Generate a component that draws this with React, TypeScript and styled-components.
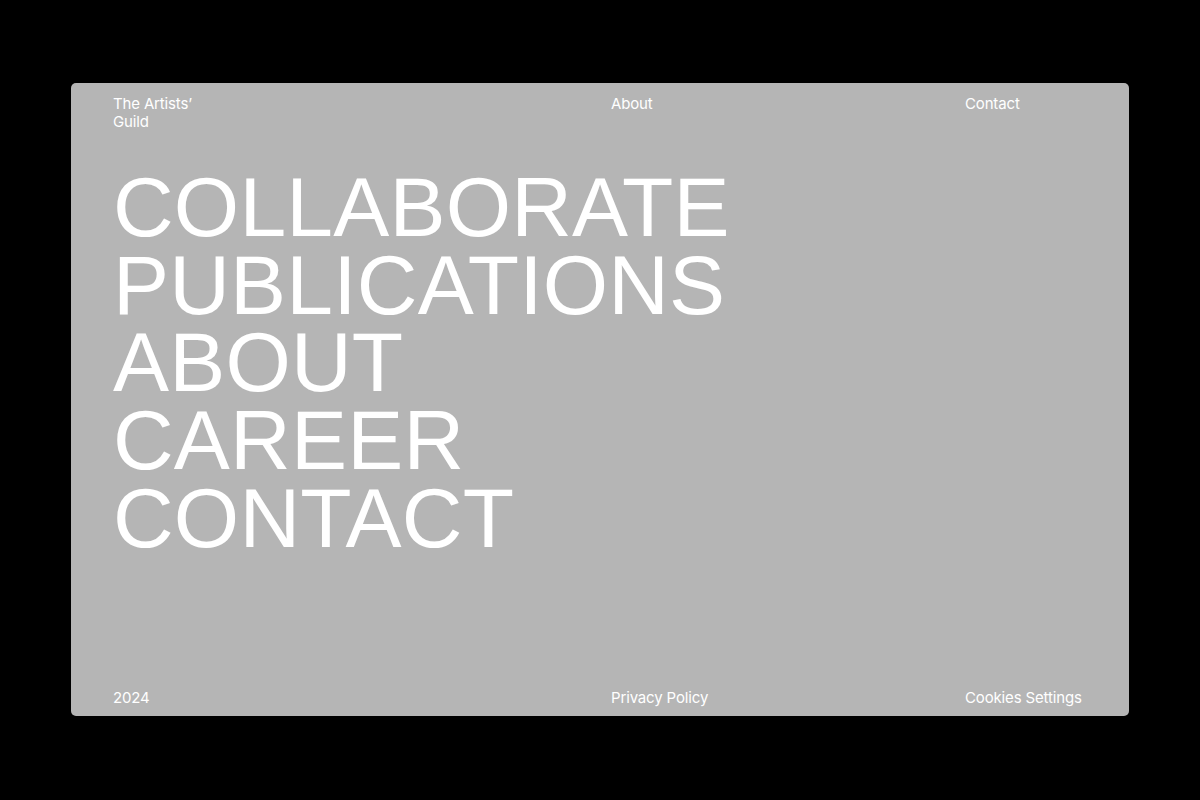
import React from "react";
import styled, { createGlobalStyle } from "styled-components";

const GlobalStyle = createGlobalStyle`
  html, body {
    margin: 0;
    padding: 0;
    background: #000;
  }
  body {
    padding: 83px 71px 84px;
    font-family: Inter, "Liberation Sans", sans-serif;
  }
`;

const Card = styled.main`
  height: 633px;
  background: #b5b5b5;
  border-radius: 5px;
  padding: 12px 42px 9px;
  box-sizing: border-box;
  display: flex;
  flex-direction: column;
  color: #fff;
`;

const Bar = styled.div`
  display: grid;
  grid-template-columns: 498px 354px 1fr;
  font-size: 15px;
  line-height: 18px;
  letter-spacing: -0.15px;
`;

const Brand = styled.a`
  max-width: 100px;
  color: inherit;
  text-decoration: none;
`;

const BarLink = styled.a`
  color: inherit;
  text-decoration: none;
`;

const Hero = styled.nav`
  flex: 1;
  display: flex;
  flex-direction: column;
  margin-top: 38px;
`;

const HeroLink = styled.a`
  font-family: "Liberation Sans", Arial, sans-serif;
  font-size: 84px;
  line-height: 77.7px;
  letter-spacing: 0.2px;
  color: #fff;
  text-decoration: none;
  text-transform: uppercase;
`;

const heroItems = ["Collaborate", "Publications", "About", "Career", "Contact"];

export default function App() {
  return (
    <>
      <GlobalStyle />
      <Card>
        <Bar>
          <Brand href="#">The Artists’ Guild</Brand>
          <BarLink href="#">About</BarLink>
          <BarLink href="#">Contact</BarLink>
        </Bar>
        <Hero>
          {heroItems.map((item) => (
            <HeroLink key={item} href="#">
              {item}
            </HeroLink>
          ))}
        </Hero>
        <Bar>
          <span>2024</span>
          <BarLink href="#">Privacy Policy</BarLink>
          <BarLink href="#">Cookies Settings</BarLink>
        </Bar>
      </Card>
    </>
  );
}
